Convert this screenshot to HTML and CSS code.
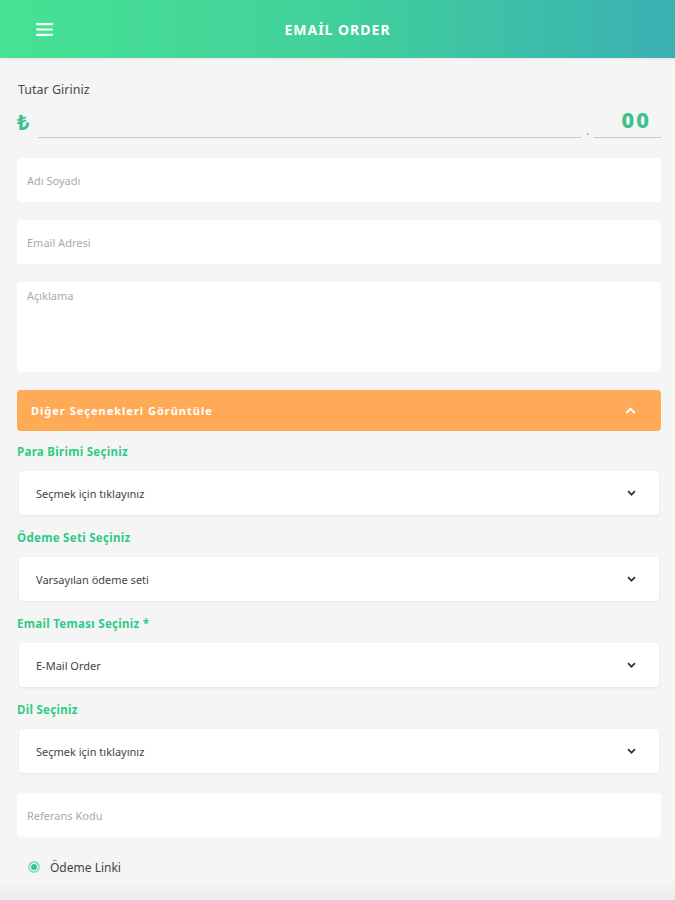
FILE: index.html
```html
<!DOCTYPE html>
<html lang="tr">
<head>
    <meta charset="UTF-8">
    <meta name="viewport" content="width=device-width, initial-scale=1.0">
    <title>Email Order</title>
    <link rel="stylesheet" href="styles.css">
</head>
<body>
    <header class="topbar">
        <button class="menu-btn" aria-label="Menü">
            <svg width="17" height="13" viewBox="0 0 17 13">
                <rect x="0" y="0" width="17" height="2.2" rx="1" fill="#fff" />
                <rect x="0" y="5.4" width="17" height="2.2" rx="1" fill="#fff" />
                <rect x="0" y="10.8" width="17" height="2.2" rx="1" fill="#fff" />
            </svg>
        </button>
        <h1>EMAİL ORDER</h1>
    </header>

    <main class="form">
        <div class="amount-label">Tutar Giriniz</div>
        <div class="amount-row">
            <span class="currency">₺</span>
            <div class="amount-int"></div>
            <span class="amount-dot">.</span>
            <div class="amount-dec">00</div>
        </div>

        <div class="field">Adı Soyadı</div>
        <div class="field">Email Adresi</div>
        <div class="field field-area">Açıklama</div>

        <div class="toggle-bar">
            <span>Diğer Seçenekleri Görüntüle</span>
            <svg width="11" height="7" viewBox="0 0 11 7">
                <path d="M1.2 6 L5.5 1.8 L9.8 6" fill="none" stroke="#fff" stroke-width="2" />
            </svg>
        </div>

        <div class="group-label">Para Birimi Seçiniz</div>
        <div class="select">
            <span>Seçmek için tıklayınız</span>
            <svg class="chev" width="9" height="6" viewBox="0 0 9 6">
                <path d="M1 1.2 L4.5 4.7 L8 1.2" fill="none" stroke="#333" stroke-width="1.7" />
            </svg>
        </div>

        <div class="group-label">Ödeme Seti Seçiniz</div>
        <div class="select">
            <span>Varsayılan ödeme seti</span>
            <svg class="chev" width="9" height="6" viewBox="0 0 9 6">
                <path d="M1 1.2 L4.5 4.7 L8 1.2" fill="none" stroke="#333" stroke-width="1.7" />
            </svg>
        </div>

        <div class="group-label">Email Teması Seçiniz *</div>
        <div class="select">
            <span>E-Mail Order</span>
            <svg class="chev" width="9" height="6" viewBox="0 0 9 6">
                <path d="M1 1.2 L4.5 4.7 L8 1.2" fill="none" stroke="#333" stroke-width="1.7" />
            </svg>
        </div>

        <div class="group-label">Dil Seçiniz</div>
        <div class="select">
            <span>Seçmek için tıklayınız</span>
            <svg class="chev" width="9" height="6" viewBox="0 0 9 6">
                <path d="M1 1.2 L4.5 4.7 L8 1.2" fill="none" stroke="#333" stroke-width="1.7" />
            </svg>
        </div>

        <div class="field field-ref">Referans Kodu</div>

        <label class="radio-row">
            <span class="radio"></span>
            <span>Ödeme Linki</span>
        </label>
    </main>
    <div class="bottom-shade"></div>
</body>
</html>
```

FILE: styles.css
```css
body {
    margin: 0;
    background: #f5f5f5;
    font-family: "Noto Sans", "Open Sans", sans-serif;
    color: #444;
    height: 900px;
    overflow: hidden;
    position: relative;
}

.topbar {
    height: 58px;
    display: flex;
    align-items: center;
    justify-content: center;
    position: relative;
    background: linear-gradient(90deg, #47e294 0%, #41d09b 50%, #3ab0b4 100%);
    box-shadow: 0 1px 2px rgba(0, 0, 0, 0.08);
}

.topbar h1 {
    margin: 0;
    color: #fff;
    font-size: 14px;
    font-weight: 700;
    letter-spacing: 1px;
}

.menu-btn {
    position: absolute;
    left: 36px;
    top: 23px;
    padding: 0;
    border: none;
    background: none;
    line-height: 0;
}

.form {
    padding: 24px 14px 0 17px;
}

.amount-label {
    font-size: 12.5px;
    line-height: 16px;
    color: #4a4a4a;
    padding-left: 1px;
}

.amount-row {
    display: flex;
    align-items: flex-end;
    margin-top: 6px;
    height: 34px;
}

.currency {
    width: 21px;
    color: #3cc08f;
    font-size: 22px;
    font-weight: 700;
    line-height: 30px;
    align-self: center;
}

.amount-int {
    flex: 1;
    border-bottom: 1px solid #c8c8c8;
    height: 100%;
}

.amount-dot {
    width: 13px;
    text-align: center;
    color: #999;
    font-size: 12px;
    line-height: 14px;
}

.amount-dec {
    width: 67px;
    border-bottom: 1px solid #c8c8c8;
    height: 100%;
    box-sizing: border-box;
    text-align: right;
    padding-right: 10px;
    color: #3cc08f;
    font-size: 22px;
    font-weight: 800;
    line-height: 30px;
    letter-spacing: 2px;
}

.field {
    margin-top: 18px;
    height: 44px;
    box-sizing: border-box;
    background: #fff;
    border-radius: 4px;
    padding: 0 10px;
    display: flex;
    align-items: center;
    font-size: 11px;
    color: #aaa;
}

.amount-row + .field {
    margin-top: 20px;
}

.field-area {
    height: 90px;
    align-items: flex-start;
    padding-top: 6px;
}

.toggle-bar {
    margin-top: 18px;
    height: 41px;
    border-radius: 4px;
    background: #ffaa56;
    display: flex;
    align-items: center;
    justify-content: space-between;
    padding: 0 25px 0 14px;
    color: #fff;
    font-size: 11px;
    font-weight: 700;
    letter-spacing: 1px;
}

.group-label {
    margin-top: 16px;
    font-size: 11.5px;
    line-height: 14px;
    font-weight: 700;
    letter-spacing: 0.3px;
    color: #2ecb86;
}

.toggle-bar + .group-label {
    margin-top: 14px;
}

.select {
    margin: 12px 2px 0;
    height: 44px;
    background: #fff;
    border-radius: 4px;
    box-shadow: 0 1px 3px rgba(0, 0, 0, 0.07);
    display: flex;
    align-items: center;
    justify-content: space-between;
    padding: 0 23px 0 17px;
    font-size: 11px;
    color: #444;
}

.field-ref {
    margin-top: 20px;
}

.radio-row {
    display: flex;
    align-items: center;
    gap: 10px;
    margin-top: 20px;
    padding-left: 11px;
    height: 20px;
    font-size: 12px;
    color: #444;
}

.radio {
    width: 8px;
    height: 8px;
    border-radius: 50%;
    border: 2px solid #8ee3c0;
    background: #2fc889;
    box-shadow: inset 0 0 0 1px #fff;
}

.bottom-shade {
    position: absolute;
    left: 0;
    right: 0;
    bottom: 0;
    height: 18px;
    background: linear-gradient(180deg, rgba(0, 0, 0, 0) 0%, rgba(0, 0, 0, 0.04) 100%);
}
```
